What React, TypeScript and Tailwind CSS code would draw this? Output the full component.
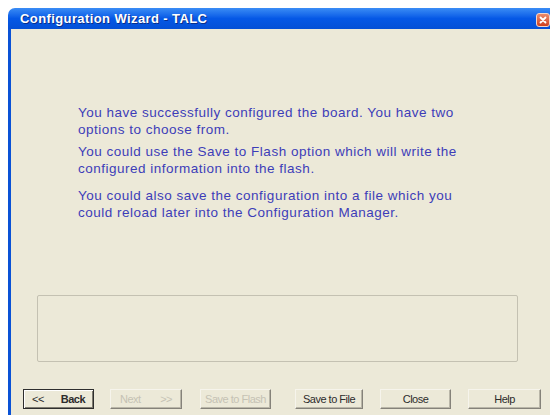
import type { ReactNode } from "react";

type WizardButtonProps = {
  children: ReactNode;
  disabled?: boolean;
  focused?: boolean;
  className?: string;
};

function WizardButton({ children, disabled, focused, className = "" }: WizardButtonProps) {
  const frame = focused
    ? "border border-[#2e2e2e] shadow-[inset_1px_1px_0_#ffffff,inset_-1px_-1px_0_#7e7b70]"
    : "border border-t-[#f6f4ec] border-l-[#f6f4ec] border-r-[#85827a] border-b-[#85827a] shadow-[inset_-1px_-1px_0_#b9b6a8]";
  return (
    <button
      type="button"
      disabled={disabled}
      className={`flex h-[20px] items-center bg-[#ece9d8] text-[11px] tracking-[-0.5px] ${frame} ${
        disabled ? "text-[#c5c2b4]" : "text-[#2c2c2c]"
      } ${className}`}
    >
      {children}
    </button>
  );
}

function CloseBox() {
  return (
    <div className="flex h-[14px] w-[14px] items-center justify-center rounded-[3px] border border-[#f2d5c8] bg-gradient-to-b from-[#e98a6b] to-[#cf3f1c]">
      <svg width={8} height={8} viewBox="0 0 8 8">
        <path d="M1.5 1.5l5 5M6.5 1.5l-5 5" stroke="white" strokeWidth={1.8} strokeLinecap="round" />
      </svg>
    </div>
  );
}

export default function App() {
  return (
    <div className="h-[415px] w-[550px] overflow-hidden bg-white pl-[8px] pt-[8px] font-['Liberation_Sans',Arial,sans-serif]">
      <div className="flex h-[420px] w-[560px] flex-col">
        {/* title bar */}
        <div className="flex h-[21px] shrink-0 items-center rounded-tl-[7px] bg-gradient-to-b from-[#3a8cf5] via-[#0558e6] to-[#0450d6] pl-[12px] pr-[13px]">
          <span className="text-[13px] font-bold tracking-[0.4px] text-white [text-shadow:1px_1px_0_#0a2f8a]">
            Configuration Wizard - TALC
          </span>
          <div className="ml-auto mr-[5px] mt-[2px]">
            <CloseBox />
          </div>
        </div>

        {/* client area */}
        <div className="flex flex-1 flex-col border-l-[3px] border-[#0a52d6] bg-[#ece9d8]">
          <div className="ml-[67px] mt-[75px] w-[394px] text-[13.5px] leading-[17px] tracking-[0.5px] text-[#3d3db8]">
            <p>
              You have successfully configured the board. You have two options to choose from.
            </p>
            <p className="mt-[5px]">
              You could use the Save to Flash option which will write the configured information
              into the flash.
            </p>
            <p className="mt-[10px]">
              You could also save the configuration into a file which you could reload later into
              the Configuration Manager.
            </p>
          </div>

          {/* status box */}
          <div className="ml-[26px] mt-[74px] h-[67px] w-[481px] rounded-[2px] border border-[#c4c1b2]" />

          {/* button row */}
          <div className="mt-[27px] flex items-center">
            <WizardButton focused className="ml-[12px] w-[71px] justify-between px-[8px]">
              <span>&lt;&lt;</span>
              <span className="font-bold">Back</span>
            </WizardButton>
            <WizardButton disabled className="ml-[16px] w-[72px] justify-between px-[9px]">
              <span>Next</span>
              <span>&gt;&gt;</span>
            </WizardButton>
            <WizardButton disabled className="ml-[18px] w-[71px] justify-center">
              Save to Flash
            </WizardButton>
            <WizardButton className="ml-[24px] w-[68px] justify-center">Save to File</WizardButton>
            <WizardButton className="ml-[17px] w-[71px] justify-center">Close</WizardButton>
            <WizardButton className="ml-[17px] w-[73px] justify-center">Help</WizardButton>
          </div>
        </div>
      </div>
    </div>
  );
}
